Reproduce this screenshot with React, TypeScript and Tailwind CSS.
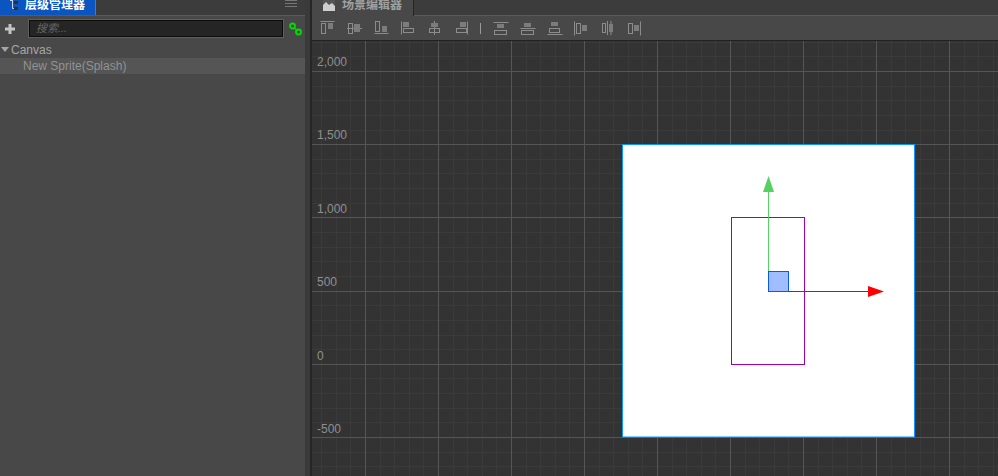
import React from 'react';

const LINE = '#8c8c8c';
const FILL = '#7c7c7c';

// align toolbar, each icon is line + hollow box + solid box on a 15px square
const alignIcons = [
    { line: 'M0.5 0.5H14.5', box: [1.5, 2.5, 4, 10], solid: [8, 2, 5, 6] },
    { line: 'M0 7.5H15', box: [1.5, 2.5, 4, 10], solid: [7, 3, 6, 8] },
    { line: 'M0.5 12.5H14.5', box: [1.5, 0.5, 4, 10], solid: [8, 5, 5, 6] },
    { line: 'M0.5 0.5V13.5', box: [2.5, 7.5, 10, 4], solid: [2, 1, 6, 5] },
    { line: 'M6.5 0V14', box: [1.5, 7.5, 10, 4], solid: [3, 2, 7, 4] },
    { line: 'M12.5 0.5V13.5', box: [1.5, 7.5, 10, 4], solid: [5, 1, 6, 5] },
];

const alignIconsRight = [
    { line: 'M0.5 1.5H15.5', box: [1.5, 9.5, 12, 4], solid: [4, 3, 7, 4] },
    { line: 'M0.5 7.5H15.5', box: [1.5, 9.5, 12, 4], solid: [4, 2, 7, 4] },
    { line: 'M0.5 13.5H15.5', box: [2.5, 7.5, 10, 4], solid: [4, 1, 7, 4] },
    { line: 'M0.5 0.5V14.5', box: [2.5, 2.5, 4, 10], solid: [8, 4, 5, 6] },
    { line: 'M6.5 0V14', box: [1.5, 2.5, 3, 9], solid: [8, 3, 4, 8], line2: 'M10 0V14' },
    { line: 'M12.5 0.5V14.5', box: [0.5, 2.5, 4, 10], solid: [6, 4, 5, 6] },
];

type AlignIcon = { line: string; line2?: string; box: number[]; solid: number[] };

const AlignButton = ({ icon }: { icon: AlignIcon }) => (
    <div className="flex h-[15px] w-[27px] shrink-0 items-start">
        <svg width="16" height="15" viewBox="0 0 16 15" fill="none">
            <path d={icon.line} stroke={LINE} />
            {icon.line2 && <path d={icon.line2} stroke={LINE} />}
            <rect x={icon.solid[0]} y={icon.solid[1]} width={icon.solid[2]} height={icon.solid[3]} fill={FILL} />
            <rect x={icon.box[0]} y={icon.box[1]} width={icon.box[2]} height={icon.box[3]} stroke={LINE} />
        </svg>
    </div>
);

const majorX = [365, 438, 511, 584, 657, 730, 803, 876, 949];
const majorY = [71, 144, 217, 291, 364, 437];
const labels = [
    { text: '2,000', top: 55 },
    { text: '1,500', top: 128 },
    { text: '1,000', top: 202 },
    { text: '500', top: 275 },
    { text: '0', top: 349 },
    { text: '-500', top: 422 },
];

const SceneDrawing = () => {
    const minorX: number[] = [];
    for (let x = 365 - 73; x < 998; x += 14.6) minorX.push(Math.round(x) + 0.5);
    const minorY: number[] = [];
    for (let y = 71 - 73.2; y < 476; y += 14.64) minorY.push(Math.round(y) + 0.5);

    return (
        <svg className="block" width="686" height="435" viewBox="312 41 686 435">
            <rect x="312" y="41" width="686" height="435" fill="#333333" />
            {minorX.map((x) => <line key={x} x1={x} x2={x} y1="41" y2="476" stroke="#3a3a3a" />)}
            {minorY.map((y) => <line key={y} y1={y} y2={y} x1="312" x2="998" stroke="#3a3a3a" />)}
            {majorX.map((x) => <line key={x} x1={x + 0.5} x2={x + 0.5} y1="41" y2="476" stroke="#555555" />)}
            {majorY.map((y) => <line key={y} y1={y + 0.5} y2={y + 0.5} x1="312" x2="998" stroke="#555555" />)}

            {/* Splash sprite */}
            <rect x="622.5" y="144.5" width="292" height="292.5" fill="#ffffff" stroke="#0a96ff" />
            <rect x="731.5" y="217.5" width="73" height="147" fill="none" stroke="#a000b0" />

            {/* move gizmo */}
            <line x1="768.5" x2="768.5" y1="190" y2="272" stroke="#55d161" />
            <polygon points="768.5,176 774,192 763,192" fill="#55d161" />
            <line x1="788" x2="870" y1="291.5" y2="291.5" stroke="#ee0000" />
            <polygon points="884,291.5 868,286 868,297" fill="#ff0000" />
            <rect x="768.5" y="271.5" width="20" height="20" fill="#a0bdff" stroke="#0a5aee" />
        </svg>
    );
};

export default function App() {
    return (
        <div className="flex h-[476px] w-[998px] overflow-hidden bg-[#3a3a3a] text-[12px] leading-[14px]" style={{ fontFamily: '"Liberation Sans", "Noto Sans CJK SC", sans-serif' }}>
            {/* Hierarchy panel */}
            <div className="flex w-[305px] shrink-0 flex-col bg-[#484848]">
                <div className="flex h-[16px] shrink-0 items-start justify-between border-b border-[#5a5a5a] bg-[#3c3c3c]">
                    <div className="flex h-[15px] w-[96px] items-start gap-[7px] overflow-hidden border-r border-[#2f7fe0] bg-[#0a55c0] pl-[10px]">
                        <svg width="8" height="11" viewBox="0 0 8 11" fill="none" className="shrink-0">
                            <path d="M0 0.5H3M2.5 0V8.5H4" stroke="#c8d4e6" />
                            <rect x="4" y="1" width="4" height="3" fill="#33302a" />
                            <rect x="4" y="7" width="4" height="3" fill="#33302a" />
                        </svg>
                        <span className="-mt-[2px] whitespace-nowrap text-[12px] font-bold leading-[14px] text-white">层级管理器</span>
                    </div>
                    <div className="mr-[8px] flex w-[12px] flex-col gap-[2px]">
                        <div className="h-px bg-[#777777]" />
                        <div className="h-px bg-[#777777]" />
                        <div className="h-px bg-[#777777]" />
                    </div>
                </div>

                <div className="flex h-[25px] shrink-0 items-center pl-[5px]">
                    <svg width="10" height="10" viewBox="0 0 10 10" className="shrink-0">
                        <path d="M5 0V10M0 5H10" stroke="#c4c4c4" strokeWidth="3" />
                    </svg>
                    <div className="ml-[13px] h-[19px] w-[256px] shrink-0 border border-[#5f5f5f]">
                        <div className="flex h-full items-center border border-[#0c0c0c] bg-[#252525] pl-[6px]">
                            <span className="text-[11px] italic leading-none text-[#666666]">搜索...</span>
                        </div>
                    </div>
                    <svg width="14" height="14" viewBox="0 0 14 14" fill="none" className="ml-[5px] shrink-0">
                        <circle cx="3.5" cy="4" r="2.5" stroke="#00dd00" strokeWidth="1.8" />
                        <circle cx="9.5" cy="10" r="2.5" stroke="#00dd00" strokeWidth="1.8" />
                        <path d="M5.5 6L7.5 8" stroke="#00dd00" strokeWidth="1.5" />
                    </svg>
                </div>

                <div className="flex h-[17px] shrink-0 items-center pl-[1px] text-[#a6a6a6]">
                    <svg width="8" height="5" viewBox="0 0 8 5" className="shrink-0">
                        <polygon points="0,0 8,0 4,5" fill="#a6a6a6" />
                    </svg>
                    <span className="ml-[2px]">Canvas</span>
                </div>
                <div className="flex h-[16px] shrink-0 items-center bg-[#555555] pl-[23px] text-[#929292]">
                    New Sprite(Splash)
                </div>
            </div>

            {/* Splitter */}
            <div className="w-[7px] shrink-0 border-r-2 border-[#262626] bg-[#3a3a3a]" />

            {/* Scene panel */}
            <div className="flex min-w-0 flex-1 flex-col">
                <div className="flex h-[16px] shrink-0 items-start border-b border-[#5a5a5a] bg-[#3c3c3c]">
                    <div className="-mb-px flex h-[16px] w-[102px] items-start gap-[7px] overflow-hidden border-r border-[#262626] bg-[#484848] pl-[11px]">
                        <svg width="12" height="11" viewBox="0 0 12 11" className="shrink-0">
                            <path d="M0 0H12V11H0Z" fill="#555555" />
                            <path d="M0 11V5L3 2L6 5L9 3L12 6V11Z" fill="#cfcfcf" />
                        </svg>
                        <span className="-mt-[2px] whitespace-nowrap text-[12px] font-bold leading-[14px] text-[#a0a0a0]">场景编辑器</span>
                    </div>
                </div>

                <div className="flex h-[25px] shrink-0 items-start border-b border-[#222222] bg-[#484848] pl-[8px] pt-[5px]">
                    {alignIcons.map((icon, i) => <AlignButton key={i} icon={icon} />)}
                    <div className="ml-[-2px] mr-[12px] mt-[2px] h-[11px] w-px shrink-0 bg-[#999999]" />
                    {alignIconsRight.map((icon, i) => <AlignButton key={i} icon={icon} />)}
                </div>

                <div className="relative min-h-0 flex-1 overflow-hidden">
                    <SceneDrawing />
                    {labels.map((l) => (
                        <span key={l.text} className="absolute left-[5px] text-[12px] leading-[14px] text-[#8f8f8f]" style={{ top: l.top - 41 }}>
                            {l.text}
                        </span>
                    ))}
                </div>
            </div>
        </div>
    );
}
